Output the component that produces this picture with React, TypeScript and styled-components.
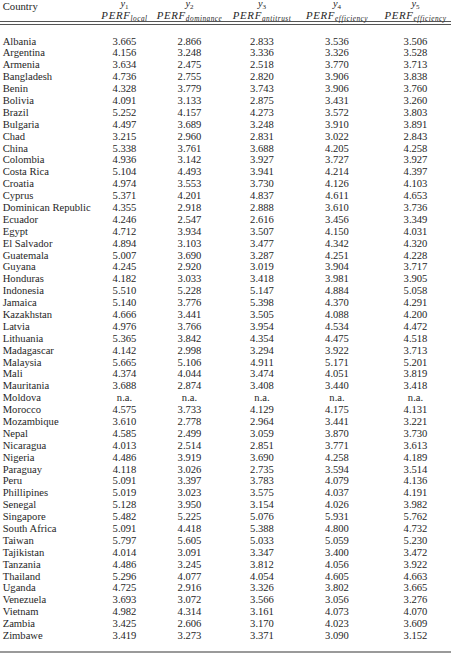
import React from "react";
import styled, { createGlobalStyle } from "styled-components";

const GlobalStyle = createGlobalStyle`
  html, body { margin: 0; padding: 0; background: #ffffff; }
  body { font-family: "Liberation Serif", "DejaVu Serif", serif; color: #262626; }
`;

const COLS = "100px 49px 81px 64px 86px 71px";

const Page = styled.div`
  width: 451px;
  height: 658px;
  overflow: hidden;
  background: #fff;
  font-family: "Liberation Serif", "DejaVu Serif", serif;
  color: #262626;
`;

const HeaderGrid = styled.div`
  display: grid;
  grid-template-columns: ${COLS};
  height: 21px;
`;

const CountryHead = styled.div`
  padding-left: 2.7px;
  font-size: 10.7px;
  line-height: 12px;
`;

const HeadCell = styled.div`
  display: flex;
  flex-direction: column;
  align-items: center;
  font-style: italic;
`;

const VarLine = styled.div`
  font-size: 10.4px;
  line-height: 8px;
  margin-top: -0.5px;
  height: 8px;
  white-space: nowrap;
`;

const PerfLine = styled.div`
  font-size: 10.8px;
  line-height: 12px;
  margin-top: 1px;
  white-space: nowrap;
`;

const Perf = styled.span`
  letter-spacing: 0.7px;
`;

const Sub = styled.span<{ $upright?: boolean; $spaced?: boolean }>`
  font-size: ${(p) => (p.$upright ? "7px" : "7.3px")};
  vertical-align: ${(p) => (p.$upright ? "-2px" : "-1.5px")};
  font-style: ${(p) => (p.$upright ? "normal" : "italic")};
  letter-spacing: ${(p) => (p.$spaced ? "0.5px" : "0")};
`;

const DoubleRule = styled.div`
  height: 2px;
  border-top: 1px solid #555;
  border-bottom: 1px solid #555;
`;

const Body = styled.div`
  padding-top: 10.5px;
`;

const Row = styled.div`
  display: grid;
  grid-template-columns: ${COLS};
  height: 11.9px;
  line-height: 11.9px;
  font-size: 10.6px;
`;

const NameCell = styled.div`
  padding-left: 2.7px;
  white-space: nowrap;
`;

const NumCell = styled.div`
  text-align: center;
  white-space: nowrap;
`;

const BottomRule = styled.div`
  margin-top: 8.6px;
  height: 2px;
  background: #9a9a9a;
`;

const data: [string, string[]][] = [
  ["Albania", ["3.665", "2.866", "2.833", "3.536", "3.506"]],
  ["Argentina", ["4.156", "3.248", "3.336", "3.326", "3.528"]],
  ["Armenia", ["3.634", "2.475", "2.518", "3.770", "3.713"]],
  ["Bangladesh", ["4.736", "2.755", "2.820", "3.906", "3.838"]],
  ["Benin", ["4.328", "3.779", "3.743", "3.906", "3.760"]],
  ["Bolivia", ["4.091", "3.133", "2.875", "3.431", "3.260"]],
  ["Brazil", ["5.252", "4.157", "4.273", "3.572", "3.803"]],
  ["Bulgaria", ["4.497", "3.689", "3.248", "3.910", "3.891"]],
  ["Chad", ["3.215", "2.960", "2.831", "3.022", "2.843"]],
  ["China", ["5.338", "3.761", "3.688", "4.205", "4.258"]],
  ["Colombia", ["4.936", "3.142", "3.927", "3.727", "3.927"]],
  ["Costa Rica", ["5.104", "4.493", "3.941", "4.214", "4.397"]],
  ["Croatia", ["4.974", "3.553", "3.730", "4.126", "4.103"]],
  ["Cyprus", ["5.371", "4.201", "4.837", "4.611", "4.653"]],
  ["Dominican Republic", ["4.355", "2.918", "2.888", "3.610", "3.736"]],
  ["Ecuador", ["4.246", "2.547", "2.616", "3.456", "3.349"]],
  ["Egypt", ["4.712", "3.934", "3.507", "4.150", "4.031"]],
  ["El Salvador", ["4.894", "3.103", "3.477", "4.342", "4.320"]],
  ["Guatemala", ["5.007", "3.690", "3.287", "4.251", "4.228"]],
  ["Guyana", ["4.245", "2.920", "3.019", "3.904", "3.717"]],
  ["Honduras", ["4.182", "3.033", "3.418", "3.981", "3.905"]],
  ["Indonesia", ["5.510", "5.228", "5.147", "4.884", "5.058"]],
  ["Jamaica", ["5.140", "3.776", "5.398", "4.370", "4.291"]],
  ["Kazakhstan", ["4.666", "3.441", "3.505", "4.088", "4.200"]],
  ["Latvia", ["4.976", "3.766", "3.954", "4.534", "4.472"]],
  ["Lithuania", ["5.365", "3.842", "4.354", "4.475", "4.518"]],
  ["Madagascar", ["4.142", "2.998", "3.294", "3.922", "3.713"]],
  ["Malaysia", ["5.665", "5.106", "4.911", "5.171", "5.201"]],
  ["Mali", ["4.374", "4.044", "3.474", "4.051", "3.819"]],
  ["Mauritania", ["3.688", "2.874", "3.408", "3.440", "3.418"]],
  ["Moldova", ["n.a.", "n.a.", "n.a.", "n.a.", "n.a."]],
  ["Morocco", ["4.575", "3.733", "4.129", "4.175", "4.131"]],
  ["Mozambique", ["3.610", "2.778", "2.964", "3.441", "3.221"]],
  ["Nepal", ["4.585", "2.499", "3.059", "3.870", "3.730"]],
  ["Nicaragua", ["4.013", "2.514", "2.851", "3.771", "3.613"]],
  ["Nigeria", ["4.486", "3.919", "3.690", "4.258", "4.189"]],
  ["Paraguay", ["4.118", "3.026", "2.735", "3.594", "3.514"]],
  ["Peru", ["5.091", "3.397", "3.783", "4.079", "4.136"]],
  ["Phillipines", ["5.019", "3.023", "3.575", "4.037", "4.191"]],
  ["Senegal", ["5.128", "3.950", "3.154", "4.026", "3.982"]],
  ["Singapore", ["5.482", "5.225", "5.076", "5.931", "5.762"]],
  ["South Africa", ["5.091", "4.418", "5.388", "4.800", "4.732"]],
  ["Taiwan", ["5.797", "5.605", "5.033", "5.059", "5.230"]],
  ["Tajikistan", ["4.014", "3.091", "3.347", "3.400", "3.472"]],
  ["Tanzania", ["4.486", "3.245", "3.812", "4.056", "3.922"]],
  ["Thailand", ["5.296", "4.077", "4.054", "4.605", "4.663"]],
  ["Uganda", ["4.725", "2.916", "3.326", "3.802", "3.665"]],
  ["Venezuela", ["3.693", "3.072", "3.566", "3.056", "3.276"]],
  ["Vietnam", ["4.982", "4.314", "3.161", "4.073", "4.070"]],
  ["Zambia", ["3.425", "2.606", "3.170", "4.023", "3.609"]],
  ["Zimbawe", ["3.419", "3.273", "3.371", "3.090", "3.152"]],
];

const heads: [string, string][] = [
  ["1", "local"],
  ["2", "dominance"],
  ["3", "antitrust"],
  ["4", "efficiency"],
  ["5", "efficiency"],
];

export default function App() {
  return (
    <Page>
      <GlobalStyle />
      <HeaderGrid>
        <CountryHead>Country</CountryHead>
        {heads.map(([n, sub], i) => (
          <HeadCell key={i}>
            <VarLine>
              y<Sub $upright>{n}</Sub>
            </VarLine>
            <PerfLine>
              <Perf>PERF</Perf>
              <Sub $spaced>{sub}</Sub>
            </PerfLine>
          </HeadCell>
        ))}
      </HeaderGrid>
      <DoubleRule />
      <Body>
        {data.map(([name, vals]) => (
          <Row key={name}>
            <NameCell>{name}</NameCell>
            {vals.map((v, i) => (
              <NumCell key={i}>{v}</NumCell>
            ))}
          </Row>
        ))}
      </Body>
      <BottomRule />
    </Page>
  );
}
